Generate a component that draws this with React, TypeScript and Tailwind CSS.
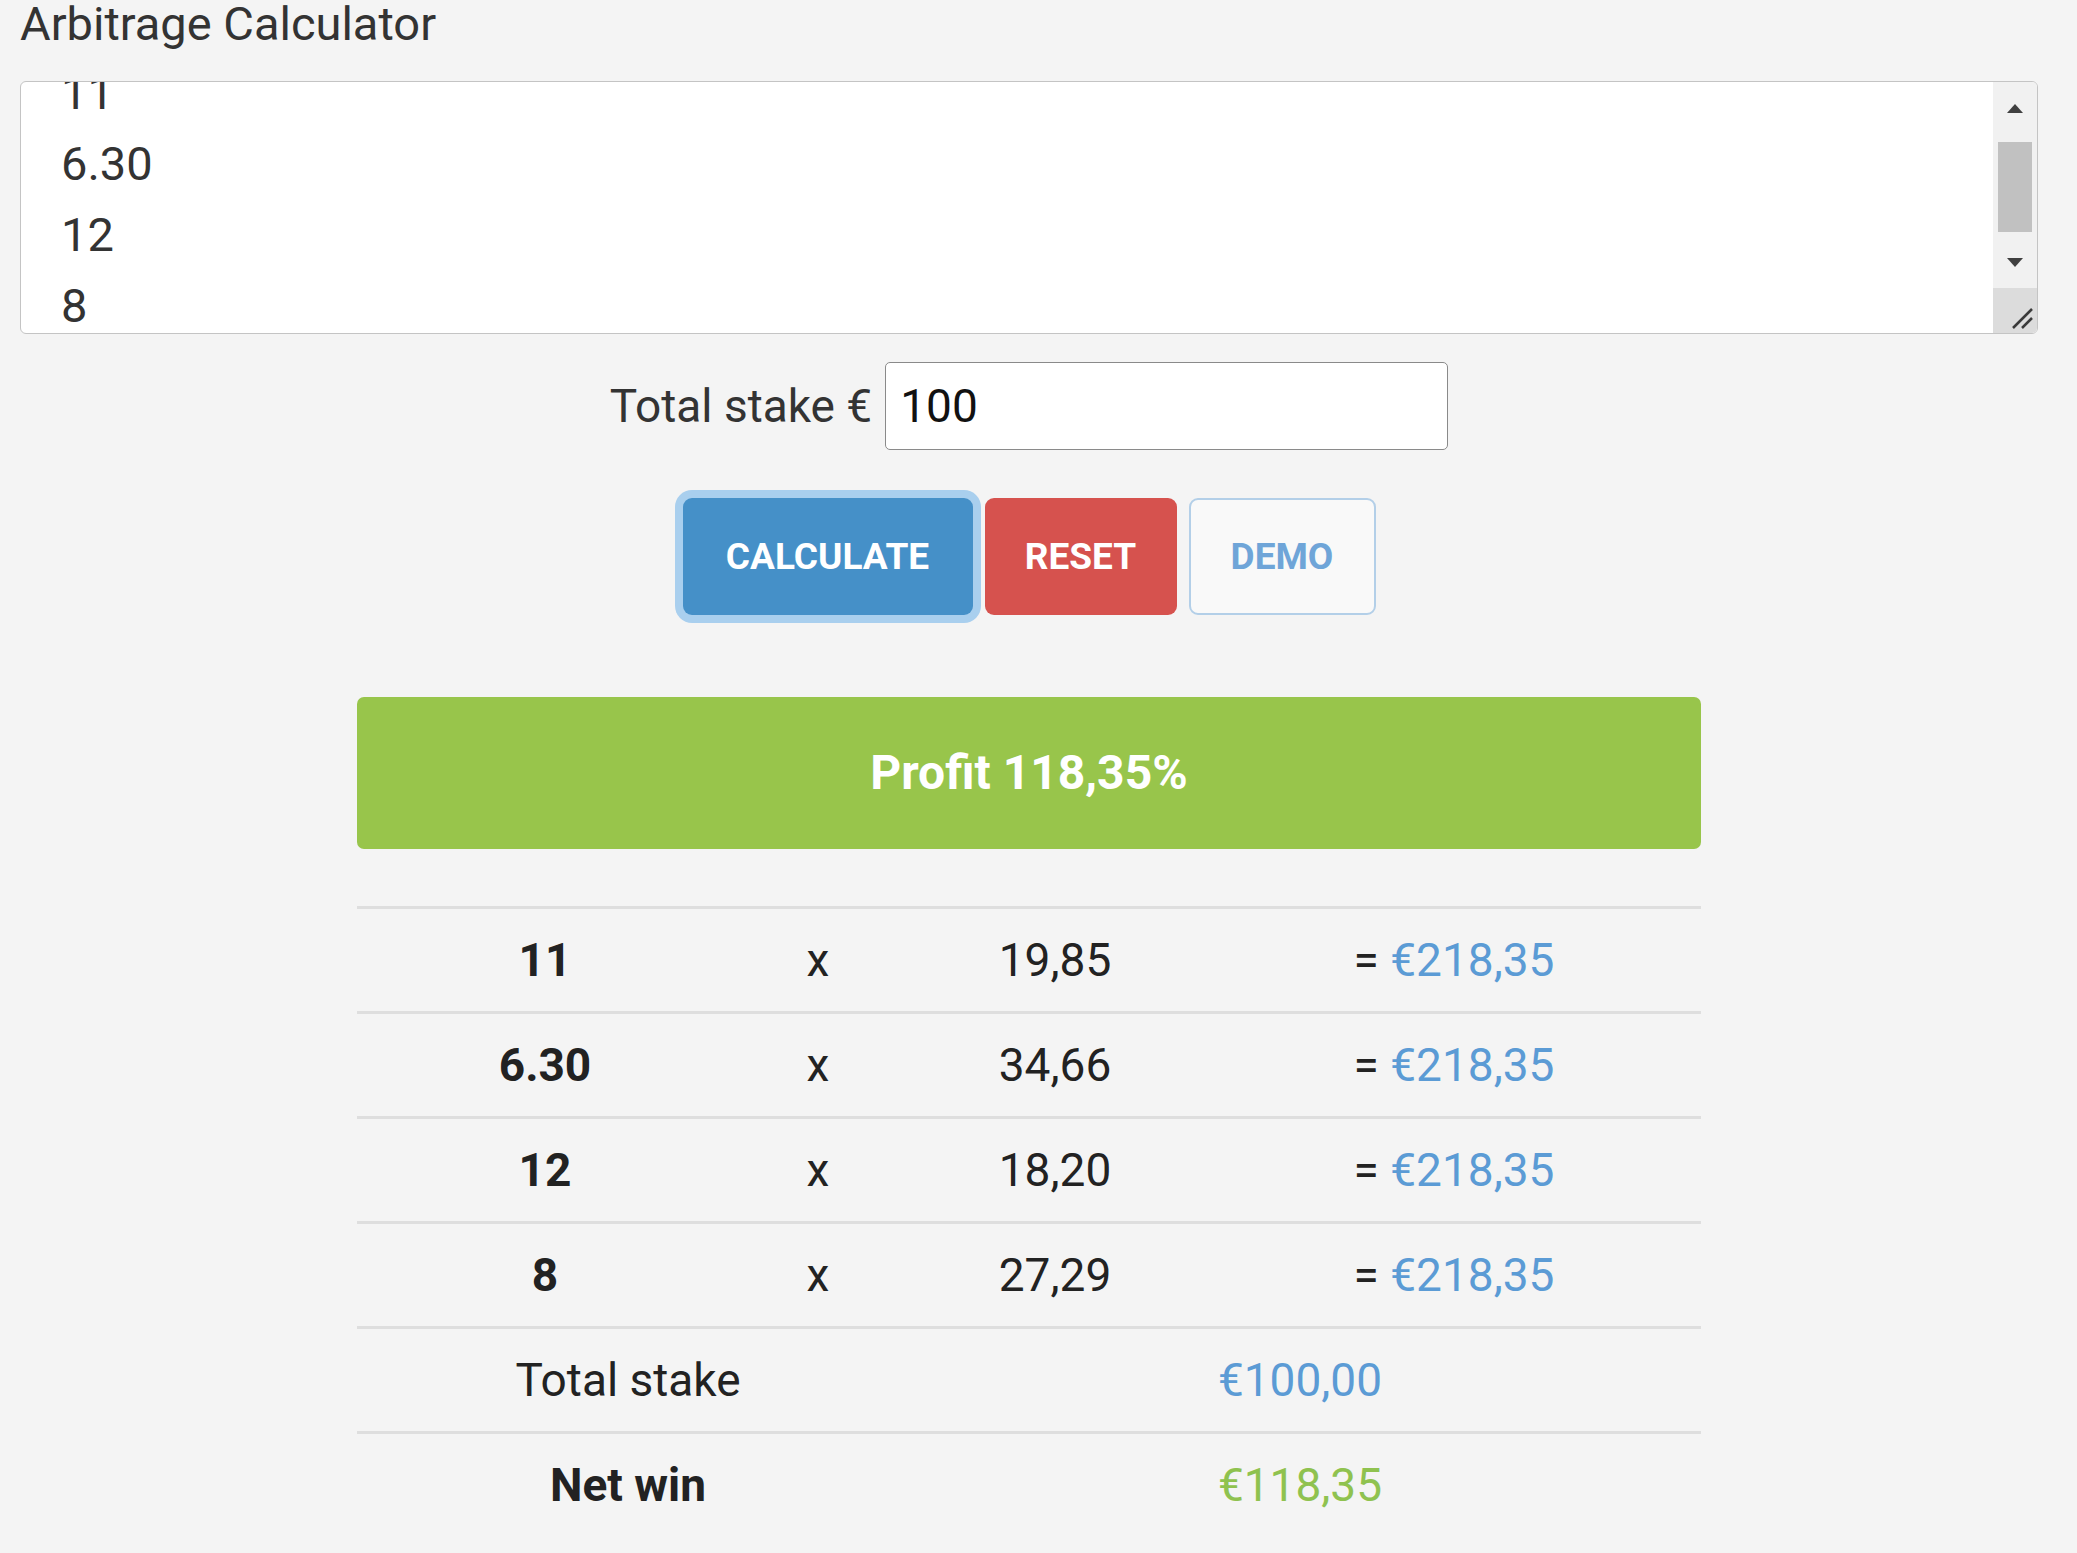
import React from "react"

const rows = [
  { odd: "11", stake: "19,85", win: "€218,35" },
  { odd: "6.30", stake: "34,66", win: "€218,35" },
  { odd: "12", stake: "18,20", win: "€218,35" },
  { odd: "8", stake: "27,29", win: "€218,35" },
]

function Scrollbar() {
  return (
    <div className="flex w-[44px] flex-col bg-[#f1f1f1]">
      {/* up arrow */}
      <div className="flex h-[52px] items-center justify-center">
        <div className="h-0 w-0 border-x-[8px] border-b-[9px] border-x-transparent border-b-[#404040]" />
      </div>
      <div className="h-[8px]" />
      {/* thumb */}
      <div className="mx-[5px] h-[90px] bg-[#c1c1c1]" />
      <div className="h-[4px]" />
      {/* down arrow */}
      <div className="flex h-[52px] items-center justify-center">
        <div className="h-0 w-0 border-x-[8px] border-t-[9px] border-x-transparent border-t-[#404040]" />
      </div>
      {/* resizer */}
      <div className="flex h-[45px] items-end justify-end bg-[#dcdcdc] pb-[3px] pr-[3px]">
        <svg width="24" height="24" viewBox="0 0 24 24">
          <line x1="22" y1="3" x2="3" y2="22" stroke="#3a3a3a" strokeWidth="2.5" />
          <line x1="22" y1="12" x2="12" y2="22" stroke="#3a3a3a" strokeWidth="2.5" />
        </svg>
      </div>
    </div>
  )
}

export default function App() {
  return (
    <div className="min-h-screen bg-[#f4f4f4] font-['Roboto',sans-serif] text-[#2a2a2a]">
      <div className="pl-[20px] pr-[39px]">
        <h1 className="pt-px text-[47px] font-normal leading-[46px] text-[#333]">Arbitrage Calculator</h1>

        {/* Odds textarea */}
        <div className="mt-[34px] flex h-[253px] overflow-hidden rounded-[6px] border border-[#c4c4c4] bg-white">
          <div className="flex-1 overflow-hidden pl-[40px]">
            <div className="-mt-[25px] text-[47px] leading-[71px] text-[#333]">
              <div>11</div>
              <div>6.30</div>
              <div>12</div>
              <div>8</div>
            </div>
          </div>
          <Scrollbar />
        </div>

        {/* Total stake */}
        <div className="mt-[28px] flex items-center justify-center gap-[13px]">
          <span className="text-[46px] text-[#333]">Total stake €</span>
          <div className="flex h-[88px] w-[563px] items-center rounded-[5px] border border-[#8a8a8a] bg-white px-[14px] text-[46px] text-[#111]">
            100
          </div>
        </div>

        {/* Buttons */}
        <div className="mt-[48px] flex justify-center gap-[12px]">
          <button className="h-[117px] w-[290px] rounded-[9px] bg-[#4590c8] text-[37px] font-bold text-white ring-[8px] ring-[#a9cfee]">
            CALCULATE
          </button>
          <button className="h-[117px] w-[192px] rounded-[9px] bg-[#d6524e] text-[37px] font-bold text-white">
            RESET
          </button>
          <button className="h-[117px] w-[187px] rounded-[9px] border-2 border-[#b3cfe8] bg-[#f9f9f9] text-[37px] font-bold text-[#6fa5d8]">
            DEMO
          </button>
        </div>

        {/* Profit */}
        <div className="mx-auto mt-[82px] flex h-[152px] w-[1344px] items-center justify-center rounded-[7px] bg-[#98c54b] text-[48px] font-bold text-white">
          Profit 118,35%
        </div>

        {/* Results */}
        <div className="mx-auto mt-[57px] w-[1344px] text-[46px]">
          {rows.map((r) => (
            <div
              key={r.odd}
              className="grid h-[105px] grid-cols-[376px_170px_304px_494px] items-center border-t-[3px] border-[#dedede] text-center"
            >
              <div className="font-bold text-[#222]">{r.odd}</div>
              <div className="text-[#222]">x</div>
              <div className="text-[#222]">{r.stake}</div>
              <div className="text-[#222]">
                = <span className="text-[#5b9bd5]">{r.win}</span>
              </div>
            </div>
          ))}
          <div className="grid h-[105px] grid-cols-[542px_802px] items-center border-t-[3px] border-[#dedede] text-center">
            <div className="text-[#222]">Total stake</div>
            <div className="text-[#5b9bd5]">€100,00</div>
          </div>
          <div className="grid h-[105px] grid-cols-[542px_802px] items-center border-t-[3px] border-[#dedede] text-center">
            <div className="font-bold text-[#222]">Net win</div>
            <div className="text-[#8fc24f]">€118,35</div>
          </div>
        </div>
      </div>
    </div>
  )
}
